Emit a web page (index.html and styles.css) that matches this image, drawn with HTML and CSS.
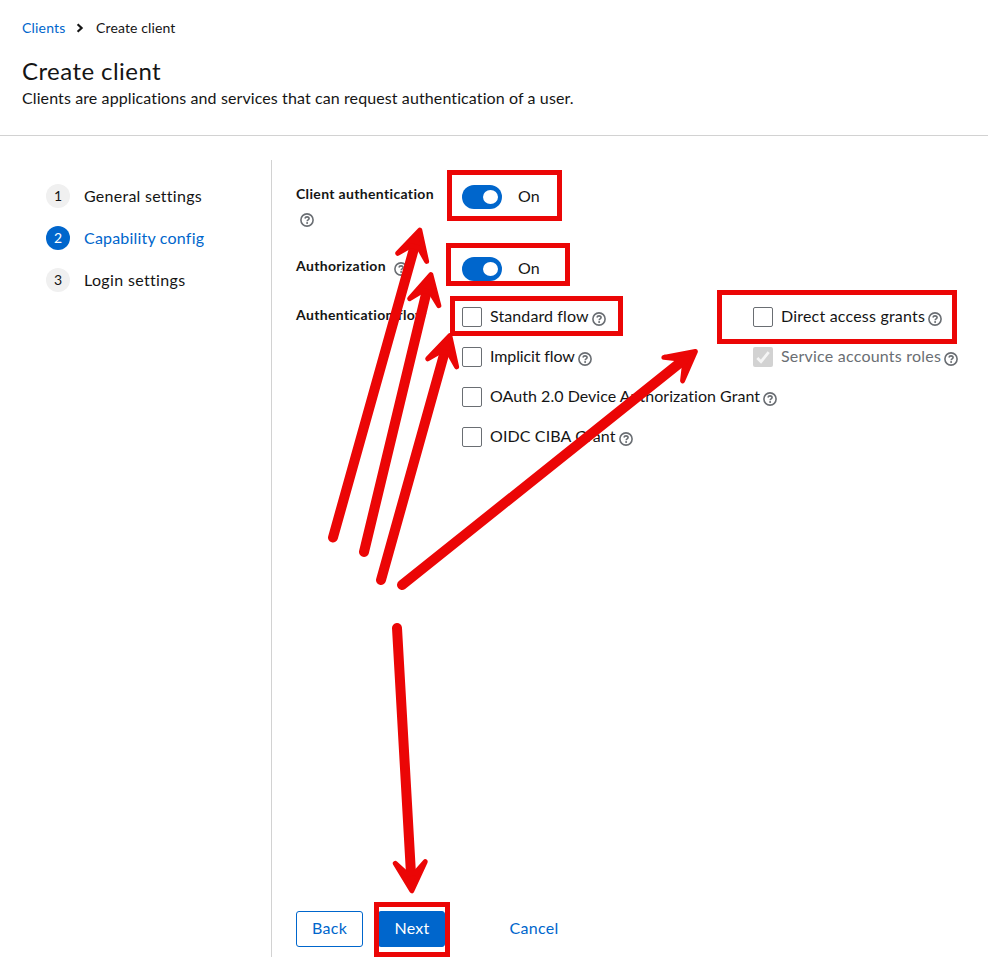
FILE: index.html
```html
<!DOCTYPE html>
<html lang="en">
<head>
<meta charset="utf-8">
<title>Create client</title>
<link rel="stylesheet" href="styles.css">
</head>
<body>
<svg class="defs" width="0" height="0" aria-hidden="true">
  <symbol id="help" viewBox="0 0 14 14">
    <circle cx="7" cy="7" r="6.1" fill="none" stroke="currentColor" stroke-width="1.6"/>
    <path d="M4.9 5.5C5.2 4.4 6 3.9 7 3.9c1.2 0 2.1.7 2.1 1.7 0 1.3-1.9 1.3-1.9 2.6" fill="none" stroke="currentColor" stroke-width="1.6"/>
    <circle cx="7.1" cy="10" r="1" fill="currentColor"/>
  </symbol>
</svg>
<header class="page-header">
  <nav class="breadcrumb">
    <a class="crumb-link">Clients</a>
    <svg class="chevron" width="8" height="10" viewBox="0 0 8 10"><path d="M1.6 1.2 5.6 5 1.6 8.8" fill="none" stroke="#151515" stroke-width="2.2"/></svg>
    <span class="crumb-current">Create client</span>
  </nav>
  <h1 class="title">Create client</h1>
  <p class="description">Clients are applications and services that can request authentication of a user.</p>
</header>
<main class="wizard">
  <ol class="steps">
    <li class="step"><span class="step-number">1</span><span class="t-general">General settings</span></li>
    <li class="step current"><span class="step-number">2</span><span class="t-capability">Capability config</span></li>
    <li class="step"><span class="step-number">3</span><span class="t-login">Login settings</span></li>
  </ol>
  <section class="content">
    <form class="form">
      <div class="row row-auth">
        <div class="label"><span>Client authentication</span> <svg class="help help-below"><use href="#help"/></svg></div>
        <div class="switch-line"><span class="switch"></span><span class="switch-text">On</span></div>
      </div>
      <div class="row row-authz">
        <div class="label"><span>Authorization</span><svg class="help help-side"><use href="#help"/></svg></div>
        <div class="switch-line"><span class="switch"></span><span class="switch-text">On</span></div>
      </div>
      <div class="row">
        <div class="label">Authentication flow</div>
        <div class="flows">
          <div class="check"><span class="box"></span><span class="name t-standard">Standard flow</span><svg class="help"><use href="#help"/></svg></div>
          <div class="check"><span class="box"></span><span class="name t-direct">Direct access grants</span><svg class="help"><use href="#help"/></svg></div>
          <div class="check"><span class="box"></span><span class="name t-implicit">Implicit flow</span><svg class="help"><use href="#help"/></svg></div>
          <div class="check"><span class="box disabled"><svg width="20" height="20" viewBox="0 0 20 20"><path d="M4.3 11 8 14.7 15.7 5.2" fill="none" stroke="#f5f5f5" stroke-width="2.8"/></svg></span><span class="name t-service">Service accounts roles</span><svg class="help"><use href="#help"/></svg></div>
          <div class="check wide"><span class="box"></span><span class="name t-oauth">OAuth 2.0 Device Authorization Grant</span><svg class="help"><use href="#help"/></svg></div>
          <div class="check wide"><span class="box"></span><span class="name t-oidc">OIDC CIBA Grant</span><svg class="help"><use href="#help"/></svg></div>
        </div>
      </div>
    </form>
    <footer class="actions">
      <button class="btn secondary">Back</button>
      <button class="btn primary">Next</button>
      <button class="btn link">Cancel</button>
    </footer>
  </section>
</main>
<svg class="annotations" width="988" height="957" viewBox="0 0 988 957" aria-hidden="true">
  <defs>
    <path id="head" d="M0 2.7 15 31 4 20H-4L-15 31Z" fill="#eb0606" stroke="#eb0606" stroke-width="5" stroke-linejoin="round"/>
  </defs>
  <g fill="none" stroke="#eb0606" stroke-width="5">
    <rect x="449.5" y="172.5" width="110" height="46"/>
    <rect x="448.5" y="245.5" width="119" height="38"/>
    <rect x="452.5" y="298.5" width="168" height="35"/>
    <rect x="719.5" y="292.5" width="235" height="49"/>
    <rect x="376.5" y="904.5" width="71" height="50"/>
  </g>
  <g stroke="#eb0606" stroke-width="10" stroke-linecap="round">
    <path d="M333 537.5 415 245"/>
    <path d="M364 552 427 290"/>
    <path d="M381 580 445 351"/>
    <path d="M402 585 681 362"/>
    <path d="M397 628 411 874"/>
  </g>
  <use href="#head" transform="translate(420.5 227.5) rotate(15.6)"/>
  <use href="#head" transform="translate(431.5 272) rotate(13.5)"/>
  <use href="#head" transform="translate(450.5 333) rotate(15.6)"/>
  <use href="#head" transform="translate(697.5 349.8) rotate(51.5)"/>
  <use href="#head" transform="translate(412 893.5) rotate(176.8)"/>
</svg>
</body>
</html>
```
FILE: styles.css
```css
* { box-sizing: border-box; }
body {
  margin: 0;
  height: 957px;
  display: flex;
  flex-direction: column;
  overflow: hidden;
  background: #fff;
  color: #151515;
  font: 16px/24px Lato, "Liberation Sans", sans-serif;
}
.defs { position: absolute; }
.page-header {
  flex: none;
  height: 136px;
  padding: 18px 22px 0;
  border-bottom: 1px solid #d2d2d2;
}
.breadcrumb {
  display: flex;
  align-items: center;
  height: 20px;
  font-size: 14px;
}
.crumb-link { width: 54px; color: #06c; letter-spacing: .2px; }
.chevron { margin-right: 12px; }
.crumb-current { letter-spacing: .13px; }
.title {
  margin: 17px 0 0;
  font-size: 24px;
  line-height: 31px;
  font-weight: 400;
  letter-spacing: .44px;
}
.description { margin: 0; letter-spacing: .105px; }
.wizard { flex: 1; display: flex; padding-top: 24px; }
.steps {
  width: 272px;
  margin: 0;
  padding: 24px 0 0 46px;
  list-style: none;
  border-right: 1px solid #d2d2d2;
  display: flex;
  flex-direction: column;
  gap: 18px;
}
.step { display: flex; gap: 14px; height: 24px; }
.step-number {
  width: 24px;
  height: 24px;
  border-radius: 50%;
  background: #f0f0f0;
  font-size: 14px;
  text-align: center;
}
.current { color: #06c; }
.current .step-number { background: #06c; color: #fff; }
.t-general { letter-spacing: .26px; }
.t-capability { letter-spacing: .2px; }
.t-login { letter-spacing: .34px; }
.content {
  flex: 1;
  display: flex;
  flex-direction: column;
  justify-content: space-between;
  padding: 24px 24px 10px;
}
.row { display: grid; grid-template-columns: 150px 1fr; column-gap: 16px; }
.row-auth { height: 72px; }
.row-authz { height: 49px; }
.label {
  font-size: 14px;
  line-height: 20px;
  font-weight: 700;
  letter-spacing: .34px;
  white-space: nowrap;
}
.help { flex: none; width: 14px; height: 14px; color: #6a6e73; }
.help-below { display: block; margin: 9px 0 0 4px; }
.help-side { margin-left: 8px; vertical-align: -5px; }
.switch-line { display: flex; gap: 16px; padding-top: 1px; height: 25px; }
.switch-text { line-height: 22px; }
.switch {
  width: 40px;
  height: 24px;
  padding: 5px 4px;
  border-radius: 12px;
  background: #06c;
  display: flex;
  justify-content: flex-end;
}
.switch::before {
  content: "";
  width: 15px;
  height: 14px;
  border-radius: 50%;
  background: #fff;
}
.flows {
  display: grid;
  grid-template-columns: 291px 1fr;
  row-gap: 16px;
  white-space: nowrap;
}
.check { display: flex; align-items: center; height: 24px; }
.wide { grid-column: 1 / -1; }
.box {
  flex: none;
  width: 20px;
  height: 20px;
  margin-right: 8px;
  border: 1px solid #6a6e73;
  border-radius: 2px;
  background: #fff;
}
.disabled { border: 0; background: #d2d2d2; }
.disabled svg { display: block; }
.name { padding-bottom: 2px; }
.check .help { margin: 4px 0 0 3px; }
.t-standard { letter-spacing: .1px; }
.t-direct { letter-spacing: .2px; }
.t-implicit { letter-spacing: -.12px; }
.t-service { letter-spacing: .22px; color: #6a6e73; }
.t-oauth { letter-spacing: .04px; }
.t-oidc { letter-spacing: .12px; }
.actions { display: flex; }
.btn {
  width: 67px;
  height: 36px;
  padding: 0 0 2px;
  border: 1px solid #06c;
  border-radius: 3px;
  background: #fff;
  color: #06c;
  font: inherit;
  letter-spacing: .3px;
}
.primary { margin-left: 15px; padding-left: 1px; background: #06c; color: #fff; }
.link { width: 81px; margin-left: 48px; padding-left: 1px; border-color: transparent; }
.annotations { position: absolute; top: 0; left: 0; pointer-events: none; }
```
